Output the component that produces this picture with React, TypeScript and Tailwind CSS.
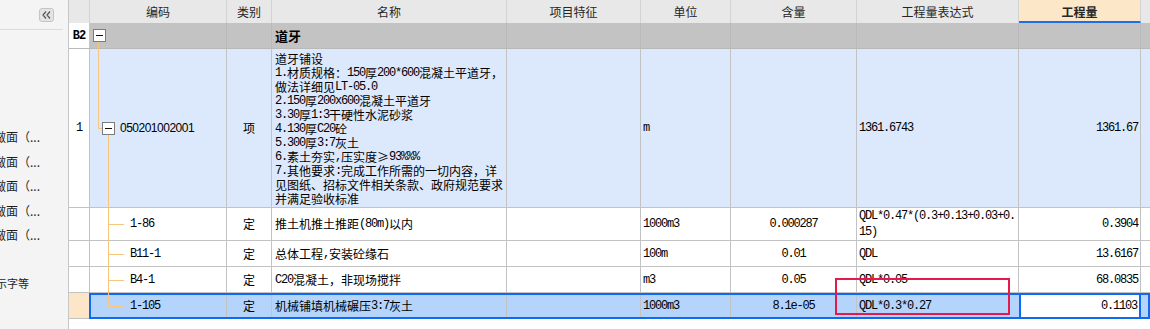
import React from "react";

// ascii runs get the narrow mono look of the original grid font
const Txt = ({ t }: { t: string }) => (
  <>
    {t.split(/([\x20-\x7e]+)/).map((s, i) =>
      i % 2 === 1 ? (
        <span key={i} className="font-['Liberation_Mono'] tracking-[-1.2px]">
          {s}
        </span>
      ) : (
        <span key={i}>{s}</span>
      )
    )}
  </>
);

const spec = [
  "道牙铺设",
  "1.材质规格：150厚200*600混凝土平道牙，",
  "做法详细见LT-05.0",
  "2.150厚200x600混凝土平道牙",
  "3.30厚1:3干硬性水泥砂浆",
  "4.130厚C20砼",
  "5.300厚3:7灰土",
  "6.素土夯实,压实度≥93%%%",
  "7.其他要求:完成工作所需的一切内容，详",
  "见图纸、招标文件相关条款、政府规范要求",
  "并满足验收标准",
];

const kids = [
  {
    code: "1-86",
    name: "推土机推土推距(80m)以内",
    unit: "1000m3",
    qty: "0.000287",
    expr: ["QDL*0.47*(0.3+0.13+0.03+0.", "15)"],
    amt: "0.3904",
    h: "h-[33px]",
  },
  { code: "B11-1", name: "总体工程,安装砼缘石", unit: "100m", qty: "0.01", expr: ["QDL"], amt: "13.6167", h: "h-[26px]" },
  { code: "B4-1", name: "C20混凝土，非现场搅拌", unit: "m3", qty: "0.05", expr: ["QDL*0.05"], amt: "68.0835", h: "h-[26px]" },
];

const sideItems = ["做面（...", "做面（...", "做面（...", "做面（...", "做面（..."];

const Head = ({ w, children, strong }: { w: string; children: React.ReactNode; strong?: boolean }) => (
  <div
    className={`${w} flex shrink-0 items-center justify-center border-r border-[#d3d3d3] ${
      strong ? "border-b-2 border-b-[#1f6ee8] bg-[#fde7c9] pt-[2px] font-bold" : ""
    }`}
  >
    {children}
  </div>
);

export default function App() {
  return (
    <div className="relative flex h-[329px] w-[1150px] overflow-hidden bg-white font-['Noto_Sans_CJK_SC',sans-serif] text-[12px] leading-[14px] text-black">
      {/* side panel */}
      <div className="flex h-full w-[69px] shrink-0 flex-col overflow-hidden border-r border-[#c6c6c6] bg-[#f4f4f4]">
        <div className="flex h-[30px] w-[63px] shrink-0 items-start justify-end border-b border-[#dcdcdc] pr-[9px] pt-[8px]">
          <div className="flex h-[14px] w-[15px] items-center justify-center rounded-[3px] border border-[#c4c4c4] bg-[#e4e4e4]">
            <svg width="9" height="8" viewBox="0 0 9 8" fill="none" stroke="#555" strokeWidth="1.2">
              <path d="M4 0.5 L1 4 L4 7.5 M8 0.5 L5 4 L8 7.5" />
            </svg>
          </div>
        </div>
        <div className="mt-[95px] flex flex-col">
          {sideItems.map((s, i) => (
            <div key={i} className="-ml-[6px] flex h-[24.5px] items-center whitespace-nowrap text-[#1e1e1e]">
              {s}
            </div>
          ))}
          <div className="-ml-[15px] mt-[23px] flex h-[24.5px] items-center whitespace-nowrap text-[11px] text-[#1e1e1e]">
            标示字等
          </div>
        </div>
      </div>

      {/* grid */}
      <div className="flex flex-1 flex-col">
        <div className="flex h-[23px] shrink-0 bg-[#e8e8e8] text-[#262626]">
          <Head w="w-[21px]">{""}</Head>
          <Head w="w-[137px]">编码</Head>
          <Head w="w-[45px]">类别</Head>
          <Head w="w-[235px]">名称</Head>
          <Head w="w-[134px]">项目特征</Head>
          <Head w="w-[90px]">单位</Head>
          <Head w="w-[126px]">含量</Head>
          <Head w="w-[162px]">工程量表达式</Head>
          <Head w="w-[122px]" strong>
            工程量
          </Head>
          <div className="flex-1" />
        </div>

        {/* B2 */}
        <div className="flex h-[26px] shrink-0 border-b border-[#b9b9b9] bg-[#c3c3c3]">
          <div className="flex w-[21px] items-center justify-center border-r border-[#c6c6c6] bg-white font-['Liberation_Mono'] font-bold tracking-[-1px]">
            B2
          </div>
          <div className="w-[137px] border-r border-[#b9b9b9]" />
          <div className="w-[45px] border-r border-[#b9b9b9]" />
          <div className="flex w-[235px] items-center border-r border-[#b9b9b9] pl-[3px] text-[13px] font-bold">道牙</div>
          <div className="w-[134px] border-r border-[#b9b9b9]" />
          <div className="w-[90px] border-r border-[#b9b9b9]" />
          <div className="w-[126px] border-r border-[#b9b9b9]" />
          <div className="w-[162px] border-r border-[#b9b9b9]" />
          <div className="w-[122px] border-r border-[#b9b9b9]" />
          <div className="flex-1" />
        </div>

        {/* list item */}
        <div className="flex h-[159px] shrink-0 border-b border-[#c3c3c3] bg-[#dce8fc]">
          <div className="flex w-[21px] items-center justify-center border-r border-[#c3c3c3] bg-white">
            <Txt t="1" />
          </div>
          <div className="flex w-[137px] items-center border-r border-[#c3c3c3] pl-[30px]">
            <span className="font-['Liberation_Sans'] tracking-[-0.5px]">050201002001</span>
          </div>
          <div className="flex w-[45px] items-center justify-center border-r border-[#c3c3c3]">项</div>
          <div className="w-[235px] whitespace-nowrap border-r border-[#c3c3c3] pl-[3px] pt-[3px]">
            {spec.map((s, i) => (
              <div key={i} className="flex h-[14px] items-center">
                <Txt t={s} />
              </div>
            ))}
          </div>
          <div className="w-[134px] border-r border-[#c3c3c3]" />
          <div className="flex w-[90px] items-center border-r border-[#c3c3c3] pl-[2px]">
            <Txt t="m" />
          </div>
          <div className="w-[126px] border-r border-[#c3c3c3]" />
          <div className="flex w-[162px] items-center border-r border-[#c3c3c3] pl-[2px]">
            <Txt t="1361.6743" />
          </div>
          <div className="flex w-[122px] items-center justify-end border-r border-[#c3c3c3] pr-[2px]">
            <Txt t="1361.67" />
          </div>
          <div className="flex-1" />
        </div>

        {kids.map((k) => (
          <div key={k.code} className={`flex ${k.h} shrink-0 border-b border-[#c3c3c3] bg-white`}>
            <div className="w-[21px] border-r border-[#c3c3c3]" />
            <div className="flex w-[137px] items-center border-r border-[#c3c3c3] pl-[40px]">
              <Txt t={k.code} />
            </div>
            <div className="flex w-[45px] items-center justify-center border-r border-[#c3c3c3]">定</div>
            <div className="flex w-[235px] items-center whitespace-nowrap border-r border-[#c3c3c3] pl-[3px]">
              <Txt t={k.name} />
            </div>
            <div className="w-[134px] border-r border-[#c3c3c3]" />
            <div className="flex w-[90px] items-center border-r border-[#c3c3c3] pl-[2px]">
              <Txt t={k.unit} />
            </div>
            <div className="flex w-[126px] items-center justify-center border-r border-[#c3c3c3]">
              <Txt t={k.qty} />
            </div>
            <div className="flex w-[162px] flex-col justify-center whitespace-nowrap border-r border-[#c3c3c3] pl-[2px]">
              {k.expr.map((e) => (
                <div key={e} className="flex h-[16px] items-center">
                  <Txt t={e} />
                </div>
              ))}
            </div>
            <div className="flex w-[122px] items-center justify-end border-r border-[#c3c3c3] pr-[2px]">
              <Txt t={k.amt} />
            </div>
            <div className="flex-1" />
          </div>
        ))}

        {/* selected row */}
        <div className="relative flex h-[26px] shrink-0 bg-[#b4d4fb]">
          <div className="w-[21px] border-b border-r border-[#c3c3c3] bg-[#fde6c8]" />
          <div className="flex w-[137px] items-center border-r border-[#c3c3c3] pl-[40px]">
            <Txt t="1-105" />
          </div>
          <div className="flex w-[45px] items-center justify-center border-r border-[#c3c3c3]">定</div>
          <div className="flex w-[235px] items-center whitespace-nowrap border-r border-[#c3c3c3] pl-[3px]">
            <Txt t="机械铺填机械碾压3:7灰土" />
          </div>
          <div className="w-[134px] border-r border-[#c3c3c3]" />
          <div className="flex w-[90px] items-center border-r border-[#c3c3c3] pl-[2px]">
            <Txt t="1000m3" />
          </div>
          <div className="flex w-[126px] items-center justify-center border-r border-[#c3c3c3]">
            <Txt t="8.1e-05" />
          </div>
          <div className="flex w-[162px] items-center pl-[2px]">
            <Txt t="QDL*0.3*0.27" />
          </div>
          <div className="flex w-[122px] items-center justify-end border-x-2 border-[#0f6af2] bg-white pr-[2px]">
            <Txt t="0.1103" />
          </div>
          <div className="flex-1" />
          <div className="pointer-events-none absolute bottom-0 left-[20px] right-0 top-0 border-2 border-[#0f6af2]" />
        </div>
      </div>

      {/* tree connectors */}
      <svg className="pointer-events-none absolute left-0 top-0" width="1150" height="329" viewBox="0 0 1150 329">
        <g stroke="#f7c57c" strokeWidth="1" fill="none">
          <path d="M98.5 42 V128.5 H102" />
          <path d="M108.5 135 V306.5" />
          <path d="M108 224.5 H124 M108 254.5 H124 M108 280.5 H124 M108 306.5 H124" />
        </g>
        <rect x="93.5" y="29.5" width="12" height="12" fill="#fff" stroke="#7c7c7c" />
        <path d="M96 35.5 H103" stroke="#111" />
        <rect x="102.5" y="122.5" width="12" height="12" fill="#fff" stroke="#7c7c7c" />
        <path d="M105 128.5 H112" stroke="#111" />
      </svg>

      {/* annotation */}
      <div className="pointer-events-none absolute left-[835px] top-[278px] h-[37px] w-[175px] border-2 border-[#e5194c]" />
    </div>
  );
}
